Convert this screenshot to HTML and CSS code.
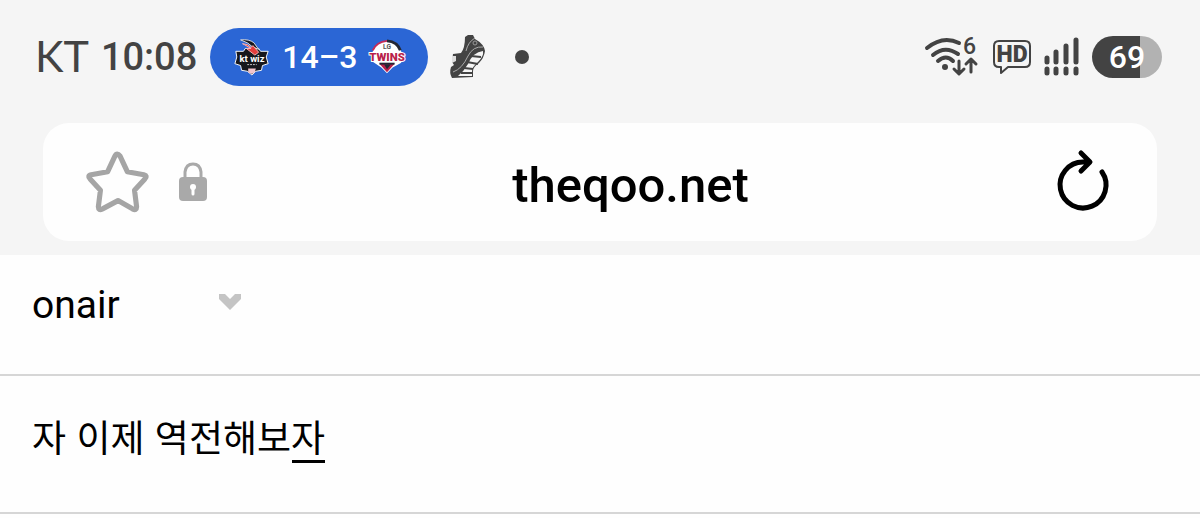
FILE: index.html
```html
<!DOCTYPE html>
<html lang="ko">
<head>
    <meta charset="UTF-8">
    <meta name="viewport" content="width=device-width, initial-scale=1.0">
    <title>theqoo.net</title>
    <link rel="stylesheet" href="styles.css">
</head>
<body>
    <header class="browser">
        <div class="status">
            <span class="carrier">KT</span>
            <span class="clock">10:08</span>
            <div class="score">
                <svg class="team" viewBox="0 0 36 40" role="img" aria-label="kt wiz">
                    <path d="M1 14h8l2-3h14l2 3h8l-2 6 2 7-6 2-1 5-6 1-4 4-5-4-6-1-1-5-6-2 2-7z" fill="#17171c" stroke="#fff" stroke-linejoin="round"/>
                    <path d="M6 2q9-1 14 3l5 7-7-3q-3-4-12-7z" fill="#17171c" stroke="#ddd"/>
                    <path d="M8 6q6 0 9 4l2-2 6 7-4 3-9-7h5l-7-4z" fill="#e33d3c" stroke="#f7b5b5"/>
                    <path d="M14 32h8l-1 4-3 2-4-2z" fill="#f3c5cc"/>
                    <text class="kt-name" x="18" y="25" text-anchor="middle">kt wiz</text>
                    <path d="M13 28h10" stroke="#ccc" stroke-dasharray="2 1"/>
                </svg>
                <span>14–3</span>
                <svg class="team" viewBox="0 0 40 40" role="img" aria-label="LG Twins">
                    <path d="M5 14Q9 4 20 3t15 11l0 12-9 5-6 6-6-6-9-6z" fill="#fff"/>
                    <path d="M5 13Q9 4 20 3" fill="none" stroke="#c52b57" stroke-width="2"/>
                    <path d="M20 3q11 1 14 10" fill="none" stroke="#222735" stroke-width="3"/>
                    <path d="M12 27h16l-8 9z" fill="#b91f4a"/>
                    <path d="M17 28h7l-4 5z" fill="#222735"/>
                    <text class="lg" x="20" y="12" text-anchor="middle">LG</text>
                    <text class="twins" x="20" y="24" text-anchor="middle">TWINS</text>
                    <path d="M12 27h16" stroke="#222735" stroke-width="2"/>
                </svg>
            </div>
            <svg class="shoe" viewBox="0 0 40 48" aria-hidden="true">
                <path d="M17 4l3-2 5 0 2 4q9 5 10 12-1 7-6 12-6 4-6 8l0 6-21 1q-3-5-1-11l3-2-2-3 1-8 8-1q4-5 4-16z" fill="#434343"/>
                <path d="M35 18q1 5-5 11-6 5-6 9v5H10q6-5 10-12 5-12 15-13z" fill="#f5f5f5"/>
                <path d="M23 23l10 1M19 29l11 2M16 35l9 1M13 40h12" stroke="#434343" stroke-width="2"/>
                <path d="M35 14q-10-1-15 9-6 13-15 16" fill="none" stroke="#aaa"/>
                <path d="M18 18q2-9 9-13" fill="none" stroke="#aaa"/>
                <circle cx="27" cy="10" r="2" fill="none" stroke="#999"/>
                <path d="M4 23h4v5l-4 2z" fill="#ddd"/>
            </svg>
            <span class="dot"></span>

            <div class="signals">
                <svg class="wifi" viewBox="0 0 56 42" role="img" aria-label="Wi-Fi 6">
                    <g fill="none" stroke="#434343" stroke-linecap="round" stroke-linejoin="round">
                        <path d="M3 12Q19-1 35 7M9 19q12-10 25-1M14 25q8-7 15 0" stroke-width="4"/>
                        <path d="M35 25v12M30 33l5 5 5-5M47 36V23M42 28l5-5 5 5" stroke-width="3"/>
                    </g>
                    <circle cx="21" cy="31" r="3" fill="#434343"/>
                    <text class="wifi-gen" x="39" y="18">6</text>
                </svg>
                <svg class="hd" viewBox="0 0 40 36" role="img" aria-label="HD">
                    <path d="M7 2h26q5 0 5 5v16q0 5-5 5H16l-7 6v-6H7q-5 0-5-5V7q0-5 5-5z" fill="none" stroke="#434343" stroke-width="2" stroke-linejoin="round"/>
                    <text class="hd-name" x="20" y="23" text-anchor="middle">HD</text>
                </svg>
                <svg class="bars" viewBox="0 0 36 38" aria-hidden="true">
                    <path d="M3 20v4M12 14v10M22 8v16M32 2v22M3 31v4M12 31v4M22 31v4M32 31v4" stroke="#434343" stroke-width="5" stroke-linecap="round"/>
                </svg>
                <span class="battery">69</span>
            </div>
        </div>

        <form class="address">
            <button class="icon-button" type="button" aria-label="Bookmark">
                <svg class="star" viewBox="0 0 60 60">
                    <path d="M27 5q2-4 5 0l7 15 16 3q4 1 1 4L46 38l2 16q0 4-4 2l-14-8-15 8q-4 2-4-2l2-16L3 27q-3-3 1-4l16-3z" fill="none" stroke="#a5a5a5" stroke-width="5" stroke-linejoin="round"/>
                </svg>
            </button>
            <button class="icon-button" type="button" aria-label="Site information">
                <svg class="lock" viewBox="0 0 30 40">
                    <path d="M7 17v-7q1-8 8-8t8 8v7" fill="none" stroke="#a9a9a9" stroke-width="3"/>
                    <rect x="1" y="15" width="28" height="24" rx="4" fill="#a9a9a9"/>
                    <circle cx="15" cy="25" r="3" fill="#fff"/>
                    <path d="M15 25v7" stroke="#fff" stroke-width="3" stroke-linecap="round"/>
                </svg>
            </button>
            <input class="url" type="text" value="theqoo.net" aria-label="Address">
            <button class="icon-button" type="button" aria-label="Reload">
                <svg class="reload" viewBox="0 0 60 64">
                    <path d="M49 22A23 23 0 1 1 30 12h6M28 3l9 9-9 9" fill="none" stroke="#000" stroke-width="5" stroke-linecap="round" stroke-linejoin="round"/>
                </svg>
            </button>
        </form>
    </header>

    <main>
        <div class="row category">
            <select class="category-select" aria-label="Category">
                <option>onair</option>
            </select>
            <svg class="chevron" viewBox="0 0 22 24" aria-hidden="true">
                <path d="M0 1h6l5 5 5-5h6v5L11 17 0 6z" fill="#c4c4c4"/>
            </svg>
        </div>
        <div class="row subject">
            <input class="subject-input" type="text" value="자 이제 역전해보자" aria-label="제목">
        </div>
    </main>
</body>
</html>
```
FILE: styles.css
```css
* {
    box-sizing: border-box;
}
body {
    margin: 0;
    background: #fefefe;
    color: #000;
    font-family: Roboto, "Noto Sans CJK KR", sans-serif;
}
svg {
    display: block;
    flex: none;
    overflow: visible;
}
.browser {
    background: #f5f5f5;
    padding: 28px 43px 14px;
}

/* status bar */
.status {
    display: flex;
    align-items: center;
    height: 58px;
    margin: 0 -5px 37px -8px;
    color: #434343;
}
.carrier {
    font-family: Lato, sans-serif;
    font-size: 43px;
    margin-right: 12px;
    padding-bottom: 4px;
}
.clock {
    font-size: 38px;
    font-weight: 500;
    margin-right: 13px;
}
.score {
    display: flex;
    align-items: center;
    justify-content: space-between;
    width: 218px;
    height: 58px;
    padding: 0 22px 0 23px;
    border-radius: 29px;
    background: #2b66d5;
    color: #fff;
    font-size: 32px;
    font-weight: 500;
}
.team {
    width: 38px;
    height: 38px;
}
.kt-name {
    font: bold 10px Roboto, sans-serif;
    fill: #fff;
}
.lg {
    font: bold 7px Roboto, sans-serif;
    fill: #555;
}
.twins {
    font: 900 12px Roboto, sans-serif;
    fill: #b91f4a;
    stroke: #fff;
    stroke-width: 2px;
    paint-order: stroke;
}
.shoe {
    width: 40px;
    height: 48px;
    margin: 0 27px 0 20px;
}
.dot {
    width: 14px;
    height: 14px;
    border-radius: 50%;
    background: #434343;
}
.signals {
    display: flex;
    align-items: center;
    gap: 12px;
    margin-left: auto;
}
.wifi {
    width: 56px;
    height: 42px;
}
.wifi-gen {
    font: 500 23px Roboto, sans-serif;
    fill: #434343;
}
.hd {
    width: 40px;
    height: 36px;
}
.hd-name {
    font: 900 23px Roboto, sans-serif;
    fill: #434343;
}
.bars {
    width: 36px;
    height: 38px;
}
.battery {
    width: 70px;
    height: 42px;
    border-radius: 21px;
    background: linear-gradient(to right, #434343 69%, #b2b2b2 69%);
    color: #fff;
    font-size: 32px;
    font-weight: 500;
    line-height: 42px;
    text-align: center;
}

/* address bar */
.address {
    display: flex;
    align-items: center;
    height: 118px;
    padding: 0 44px;
    border-radius: 26px;
    background: #fefefe;
}
.icon-button {
    flex: none;
    padding: 0;
    border: 0;
    background: none;
    cursor: pointer;
}
.star {
    width: 62px;
    height: 62px;
    margin-right: 29px;
}
.lock {
    width: 30px;
    height: 40px;
}
.url {
    flex: 1;
    min-width: 0;
    padding: 6px 0 0;
    border: 0;
    background: none;
    color: #000;
    font: 500 49px Roboto, sans-serif;
    text-align: center;
    outline: none;
}
.reload {
    width: 60px;
    height: 64px;
}

/* post form */
.row {
    display: flex;
    align-items: center;
    padding: 0 32px;
    border-bottom: 2px solid #d6d6d6;
}
.category {
    height: 121px;
    padding-bottom: 20px;
}
.category-select {
    width: 187px;
    padding: 0;
    border: 0;
    background: none;
    color: #000;
    font: 39px Roboto, sans-serif;
    appearance: none;
    outline: none;
}
.chevron {
    width: 22px;
    height: 24px;
    pointer-events: none;
}
.subject {
    height: 138px;
    padding-bottom: 16px;
}
.subject-input {
    width: 100%;
    height: 60px;
    padding: 0;
    border: 0;
    /* underline of the syllable still being composed */
    background: linear-gradient(#000, #000) 260px 54px / 33px 3px no-repeat;
    color: #000;
    font: 37px "Noto Sans CJK KR", sans-serif;
    outline: none;
}
```
